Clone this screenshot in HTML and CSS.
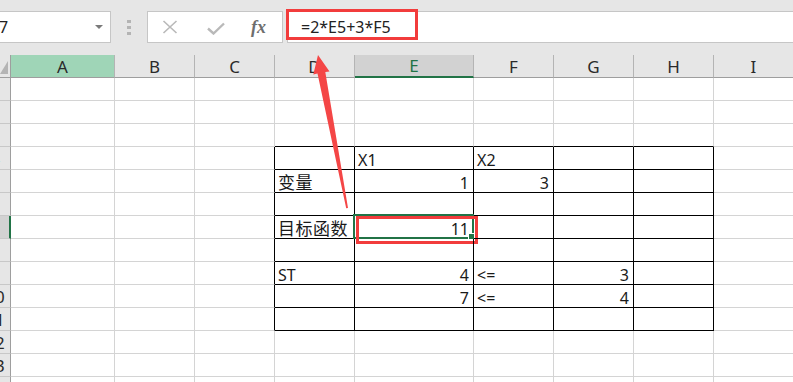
FILE: index.html
```html
<!DOCTYPE html>
<html lang="zh">
<head>
<meta charset="utf-8">
<link rel="stylesheet" href="styles.css">
</head>
<body>
<div class="toolbar">
  <div class="namebox"><span class="nb-text">E7</span><span class="caret"></span></div>
  <div class="dots"><i></i><i></i><i></i></div>
  <div class="fxbox">
    <svg class="ic-x" width="16" height="14" viewBox="0 0 16 14"><path d="M1.5 1 L14.5 13 M14.5 1 L1.5 13" stroke="#b9b9b9" stroke-width="1.6" fill="none"/></svg>
    <svg class="ic-ok" width="18" height="13" viewBox="0 0 18 13"><path d="M1 6.5 L6.5 11.5 L17 1.5" stroke="#b9b9b9" stroke-width="2.4" fill="none"/></svg>
    <span class="ic-fx">fx</span>
  </div>
  <div class="formula">=2*E5+3*F5</div>
  <div class="redbox redbox-formula"></div>
</div>

<div class="sheet">
  <!-- header -->
  <div class="corner"><span class="tri"></span></div>
  <div class="ch ch-a">A</div>
  <div class="ch">B</div>
  <div class="ch">C</div>
  <div class="ch">D</div>
  <div class="ch ch-e">E</div>
  <div class="ch">F</div>
  <div class="ch">G</div>
  <div class="ch">H</div>
  <div class="ch">I</div>

  <!-- row 1 -->
  <div class="rh"><span>1</span></div><div class="c"></div><div class="c"></div><div class="c"></div><div class="c"></div><div class="c"></div><div class="c"></div><div class="c"></div><div class="c"></div><div class="c"></div>
  <!-- row 2 -->
  <div class="rh"><span>2</span></div><div class="c"></div><div class="c"></div><div class="c"></div><div class="c"></div><div class="c"></div><div class="c"></div><div class="c"></div><div class="c"></div><div class="c"></div>
  <!-- row 3 -->
  <div class="rh"><span>3</span></div><div class="c"></div><div class="c"></div><div class="c"></div><div class="c bb"></div><div class="c bb"></div><div class="c bb"></div><div class="c bb"></div><div class="c bb"></div><div class="c"></div>
  <!-- row 4 -->
  <div class="rh"><span>4</span></div><div class="c"></div><div class="c"></div><div class="c br"></div><div class="c t"></div><div class="c t">X1</div><div class="c t">X2</div><div class="c t"></div><div class="c t"></div><div class="c"></div>
  <!-- row 5 -->
  <div class="rh"><span>5</span></div><div class="c"></div><div class="c"></div><div class="c br"></div><div class="c t cjk">变量</div><div class="c t r">1</div><div class="c t r">3</div><div class="c t"></div><div class="c t"></div><div class="c"></div>
  <!-- row 6 -->
  <div class="rh"><span>6</span></div><div class="c"></div><div class="c"></div><div class="c br"></div><div class="c t"></div><div class="c t"></div><div class="c t"></div><div class="c t"></div><div class="c t"></div><div class="c"></div>
  <!-- row 7 -->
  <div class="rh rh-sel"><span>7</span></div><div class="c"></div><div class="c"></div><div class="c br"></div><div class="c t cjk">目标函数</div><div class="c t r sel">11<span class="selbox"><i class="handle"></i></span><span class="redbox redbox-cell"></span></div><div class="c t"></div><div class="c t"></div><div class="c t"></div><div class="c"></div>
  <!-- row 8 -->
  <div class="rh"><span>8</span></div><div class="c"></div><div class="c"></div><div class="c br"></div><div class="c t"></div><div class="c t"></div><div class="c t"></div><div class="c t"></div><div class="c t"></div><div class="c"></div>
  <!-- row 9 -->
  <div class="rh"><span>9</span></div><div class="c"></div><div class="c"></div><div class="c br"></div><div class="c t">ST</div><div class="c t r">4</div><div class="c t">&lt;=</div><div class="c t r">3</div><div class="c t"></div><div class="c"></div>
  <!-- row 10 -->
  <div class="rh"><span>10</span></div><div class="c"></div><div class="c"></div><div class="c br"></div><div class="c t"></div><div class="c t r">7</div><div class="c t">&lt;=</div><div class="c t r">4</div><div class="c t"></div><div class="c"></div>
  <!-- row 11 -->
  <div class="rh"><span>11</span></div><div class="c"></div><div class="c"></div><div class="c br"></div><div class="c t"></div><div class="c t"></div><div class="c t"></div><div class="c t"></div><div class="c t"></div><div class="c"></div>
  <!-- row 12 -->
  <div class="rh"><span>12</span></div><div class="c"></div><div class="c"></div><div class="c"></div><div class="c"></div><div class="c"></div><div class="c"></div><div class="c"></div><div class="c"></div><div class="c"></div>
  <!-- row 13 -->
  <div class="rh"><span>13</span></div><div class="c"></div><div class="c"></div><div class="c"></div><div class="c"></div><div class="c"></div><div class="c"></div><div class="c"></div><div class="c"></div><div class="c"></div>
  <!-- row 14 -->
  <div class="rh"><span>14</span></div><div class="c"></div><div class="c"></div><div class="c"></div><div class="c"></div><div class="c"></div><div class="c"></div><div class="c"></div><div class="c"></div><div class="c"></div>
</div>

<svg class="arrow" width="793" height="382" viewBox="0 0 793 382">
  <polygon points="318,55 329.5,71.5 325.3,72 348,208 346.2,208.3 317.5,73.4 313.3,74.5" fill="#f44646"/>
</svg>
</body>
</html>
```

FILE: styles.css
```css
html, body {
  margin: 0;
  padding: 0;
}
body {
  width: 793px;
  height: 382px;
  overflow: hidden;
  position: relative;
  background: #ffffff;
  font-family: "Noto Sans", "Noto Sans CJK SC", sans-serif;
  color: #1a1a1a;
}

/* ---------- toolbar ---------- */
.toolbar {
  position: relative;
  height: 55px;
  box-sizing: border-box;
  padding-top: 11px;
  background: #e6e6e6;
  display: flex;
  align-items: flex-start;
}
.namebox {
  margin-left: -20px;
  width: 131px;
  height: 32px;
  box-sizing: border-box;
  background: #fff;
  border: 1px solid #c6c6c6;
  display: flex;
  align-items: center;
  font-size: 16px;
  padding-left: 9px;
}
.nb-text {
  color: #222;
}
.caret {
  margin-left: auto;
  margin-right: 7px;
  width: 0;
  height: 0;
  border-left: 4px solid transparent;
  border-right: 4px solid transparent;
  border-top: 4px solid #7a7a7a;
}
.dots {
  margin-left: 16px;
  margin-top: 9px;
  display: flex;
  flex-direction: column;
  gap: 3px;
}
.dots i {
  display: block;
  width: 4px;
  height: 3px;
  background: #b4b4b4;
}
.fxbox {
  margin-left: 16px;
  width: 136px;
  height: 32px;
  box-sizing: border-box;
  background: #fff;
  border: 1px solid #c6c6c6;
  display: flex;
  align-items: center;
}
.ic-x {
  margin-left: 14px;
}
.ic-ok {
  margin-left: 29px;
  margin-top: 2px;
}
.ic-fx {
  margin-left: 26px;
  font-family: "Liberation Serif", serif;
  font-style: italic;
  font-weight: bold;
  font-size: 18px;
  color: #6e6e6e;
  line-height: 1;
}
.formula {
  margin-left: 4px;
  margin-right: -2px;
  flex: 1;
  height: 32px;
  box-sizing: border-box;
  background: #fff;
  border: 1px solid #c6c6c6;
  padding-left: 13px;
  font-size: 16px;
  line-height: 30px;
  color: #222;
}
.redbox {
  position: absolute;
  box-sizing: border-box;
  border: 3px solid #f23c3c;
  pointer-events: none;
}
.redbox-formula {
  left: 286px;
  top: 9px;
  width: 132px;
  height: 31px;
}

/* ---------- sheet grid ---------- */
.sheet {
  display: grid;
  grid-template-columns: 11px 104px 80px 80px 80px 119px 80px 80px 80px 80px;
  grid-auto-rows: 23px;
  font-size: 16px;
}
.sheet > div {
  box-sizing: border-box;
  min-width: 0;
}
.corner {
  background: #e6e6e6;
  border-right: 1px solid #9e9e9e;
  border-bottom: 1px solid #9e9e9e;
  position: relative;
}
.tri {
  position: absolute;
  right: 2px;
  bottom: 3px;
  width: 0;
  height: 0;
  border-left: 8px solid transparent;
  border-bottom: 13px solid #b4b4b4;
}
.ch {
  background: #e6e6e6;
  border-right: 1px solid #b4b4b4;
  border-bottom: 1px solid #9e9e9e;
  display: flex;
  align-items: center;
  justify-content: center;
  font-size: 17px;
  color: #2a2a2a;
}
.ch-a {
  background: #9fd5b7;
}
.ch-e {
  background: #d2d2d2;
  border-bottom: 2px solid #217346;
  color: #217346;
}
.rh {
  background: #e6e6e6;
  border-right: 1px solid #9e9e9e;
  border-bottom: 1px solid #c8c8c8;
  display: flex;
  align-items: center;
  justify-content: flex-end;
  overflow: hidden;
  font-size: 17px;
  color: #2a2a2a;
}
.rh span {
  flex: 0 0 30px;
  text-align: center;
}
.rh-sel {
  background: #d2d2d2;
  border-right: 2px solid #217346;
}
.c {
  border-right: 1px solid #d4d4d4;
  border-bottom: 1px solid #d4d4d4;
  display: flex;
  align-items: flex-end;
  justify-content: flex-start;
  padding: 0 3px;
  line-height: 18px;
  white-space: nowrap;
  position: relative;
}
.c.r {
  justify-content: flex-end;
  padding-right: 4px;
}
.c.cjk {
  font-size: 17px;
  letter-spacing: 0.5px;
}
.bb {
  border-bottom-color: #000;
}
.br {
  border-right-color: #000;
}
.t {
  border-right-color: #000;
  border-bottom-color: #000;
}
.selbox {
  position: absolute;
  left: -2px;
  top: -2px;
  width: 121px;
  height: 25px;
  box-sizing: border-box;
  border: 2px solid #217346;
  pointer-events: none;
}
.handle {
  position: absolute;
  right: -3px;
  bottom: -3px;
  width: 5px;
  height: 5px;
  background: #217346;
  border: 1px solid #fff;
}
.redbox-cell {
  left: 1px;
  top: 0;
  width: 122px;
  height: 28px;
}

/* ---------- annotation ---------- */
.arrow {
  position: absolute;
  left: 0;
  top: 0;
  pointer-events: none;
}
```
